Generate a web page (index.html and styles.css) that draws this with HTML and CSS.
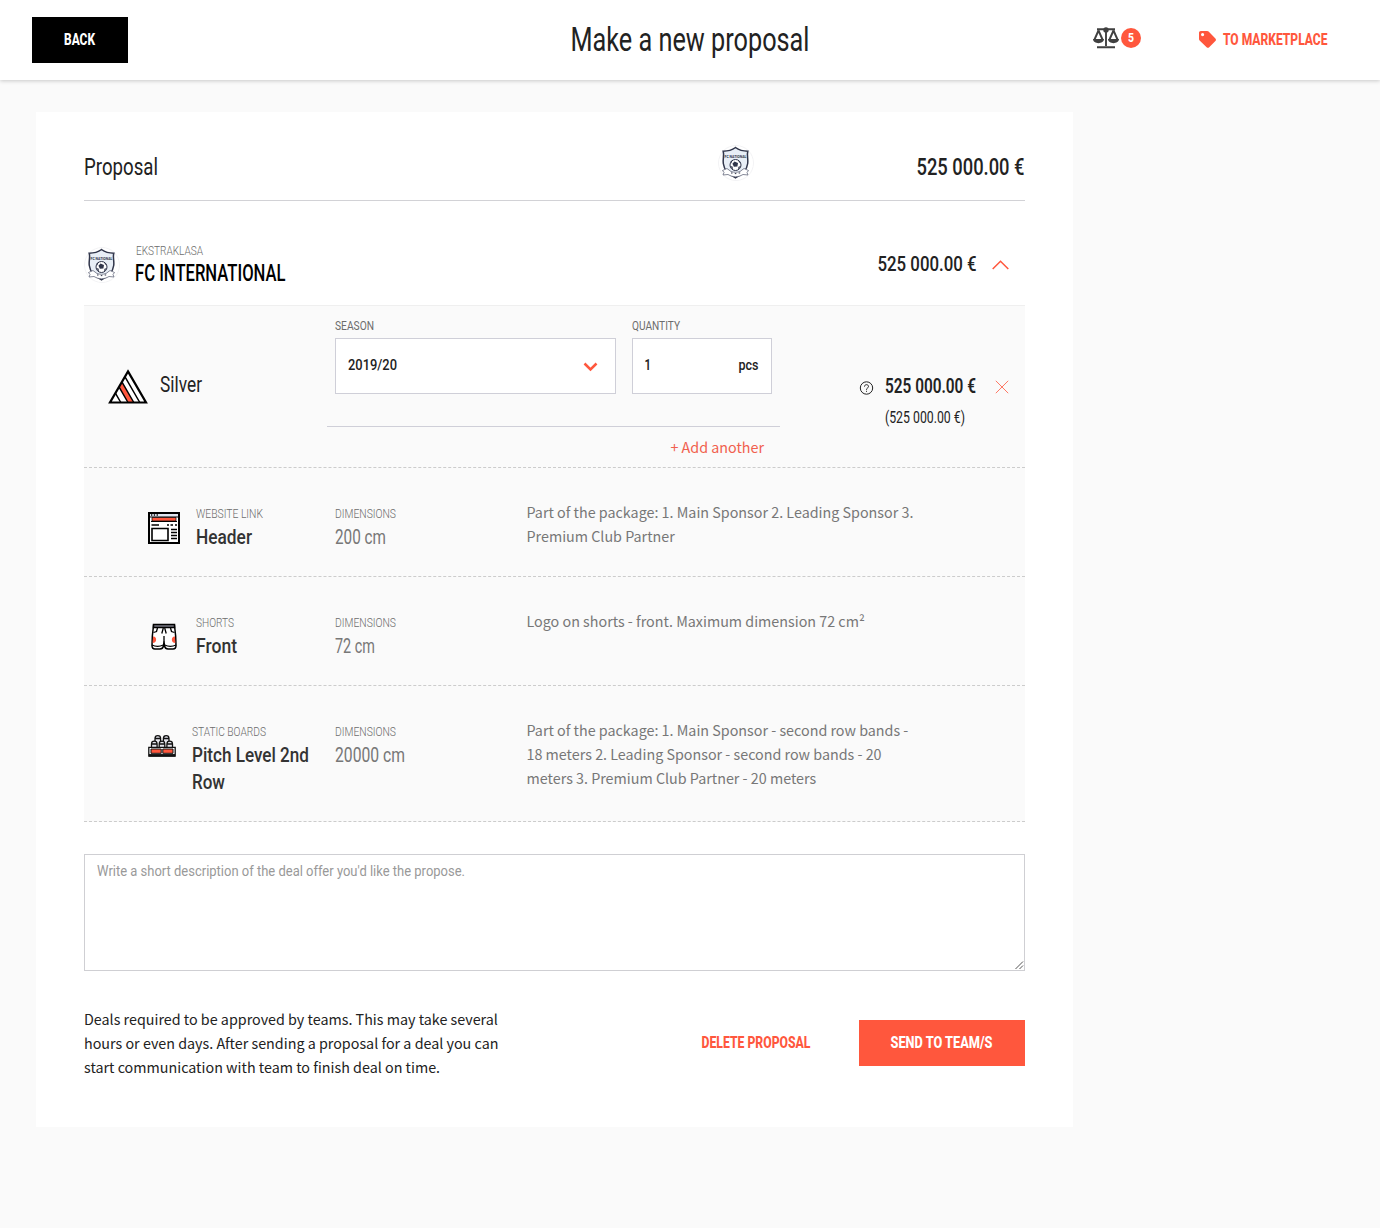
FILE: index.html
```html
<!DOCTYPE html>
<html lang="en">
<head>
<meta charset="utf-8">
<title>Make a new proposal</title>
<link rel="stylesheet" href="styles.css">
</head>
<body>
<svg class="defs" width="0" height="0">
  <symbol id="crest" viewBox="0 0 36 36">
    <circle cx="18" cy="18" r="17.5" fill="#fff" stroke="#f3f3f5"/>
    <path d="M17.500 2.500c3 2.200 7.500 3.700 12.300 3.700-1.200 4 .6 8-.1 12.300-.8 6.500-5.500 11-12.200 14.300C10.800 29.500 6.100 25 5.300 18.500 4.600 14.200 6.400 10.200 5.200 6.200c4.800 0 9.300-1.500 12.300-3.700z" fill="#e8eef6" stroke="#30354a" stroke-width="1.500"/>
    <text x="17.500" y="13" text-anchor="middle" textLength="22" lengthAdjust="spacingAndGlyphs" class="crest-name">FC NATIONAL</text>
    <circle cx="17.500" cy="20" r="5.500" fill="#fff" stroke="#30354a"/>
    <path d="M16.500 16.500l3.500 1.500-.6 3.500-3.500.2-1.500-3zM12.500 16.500l2.500-2-1.800 4zM20 14.800l3 3-2-.3zM12 21l2.500.5.700 3.300zM23 21l-2.500.8-.7 3z" fill="#30354a"/>
    <path d="M4.500 25.500l4.500-2 4 3c3 1 6 1 9 0l4-3 4.500 2-1.500 2 1 2.500-5-.5-3 1.500c-3 1-6 1-9 0l-3-1.500-5 .5 1-2.500z" fill="#fff" stroke="#656a7c" stroke-width=".8"/>
    <path d="M13 28h1.500M16.800 28.600h1.500M20.700 28h1.500" stroke="#30354a"/>
  </symbol>
</svg>

<header class="topbar">
  <button class="btn btn-back"><svg class="t w8 s16" width="32" height="22"><text y="16" textLength="31" lengthAdjust="spacingAndGlyphs">BACK</text></svg></button>
  <h1 class="title"><svg class="t w4 s32" width="239" height="40"><text x="-.5" y="31" textLength="239" lengthAdjust="spacingAndGlyphs">Make a new proposal</text></svg></h1>
  <nav class="nav">
    <a class="compare">
      <svg width="26" height="22" viewBox="0 0 26 22" fill="none" stroke="#404040" stroke-width="1.900">
        <path d="M4 2.300h18M13 2v17M4 20.200h18M5.500 3.500L1.500 12.500M5.500 3.500L9.500 12.500M20.500 3.500L16.500 12.500M20.500 3.500L24.500 12.500"/>
        <path d="M0 12h11c0 5.500-11 5.500-11 0zM15 12h11c0 5.500-11 5.500-11 0z" fill="#404040" stroke="none"/>
        <circle cx="13" cy="3" r="2.700" fill="#404040" stroke="none"/>
      </svg>
      <span class="badge"><svg class="t w8 s13" width="6" height="16"><text y="12" textLength="6" lengthAdjust="spacingAndGlyphs">5</text></svg></span>
    </a>
    <a class="market">
      <svg class="tag" width="17" height="17" viewBox="0 0 17 17"><path fill="#ff573d" fill-rule="evenodd" d="M1.800 0h6.400c.5 0 1 .2 1.400.6l6.800 6.800c.8.800.8 1.800 0 2.600l-6.200 6.200c-.8.800-1.800.8-2.600 0L.6 9.400C.2 9 0 8.500 0 8V1.800C0 .8.800 0 1.800 0zM3.600 2a1.600 1.600 0 100 3.200 1.600 1.600 0 000-3.200z"/></svg>
      <svg class="t w8 s16 red" width="105" height="22"><text y="16" textLength="104.500" lengthAdjust="spacingAndGlyphs">TO MARKETPLACE</text></svg>
    </a>
  </nav>
</header>

<main class="card">
  <section class="summary">
    <h2 class="summary-name"><svg class="t w4 s24" width="74" height="32"><text y="24" textLength="74" lengthAdjust="spacingAndGlyphs">Proposal</text></svg></h2>
    <svg class="crest" width="36" height="36"><use href="#crest"/></svg>
    <svg class="t w5 s24" width="108" height="32"><text x="-.5" y="24" textLength="108" lengthAdjust="spacingAndGlyphs">525 000.00 €</text></svg>
  </section>

  <section class="club">
    <svg class="crest" width="36" height="36"><use href="#crest"/></svg>
    <div class="club-name">
      <svg class="t w3 s14 gray" width="67" height="19"><text x="1" y="14" textLength="67" lengthAdjust="spacingAndGlyphs">EKSTRAKLASA</text></svg>
      <svg class="t w5 s24 black" width="150" height="30"><text y="21" textLength="150.500" lengthAdjust="spacingAndGlyphs">FC INTERNATIONAL</text></svg>
    </div>
    <svg class="t w5 s21" width="99" height="30"><text x="-.5" y="22" textLength="99" lengthAdjust="spacingAndGlyphs">525 000.00 €</text></svg>
    <svg class="chev" width="17" height="10" fill="none" stroke="#ff573d" stroke-width="1.500"><path d="M.7 9L8.500 1.200 16.300 9"/></svg>
  </section>

  <section class="package">
    <div class="tier">
      <svg width="40" height="35" viewBox="0 0 40 35">
        <path d="M20 2.200L38 33.500H2z" fill="#fff"/>
        <path d="M13.700 12.900L11 17.500 20.200 33.500H25.600z" fill="#ff573d"/>
        <path d="M16.900 7.600L31.800 33.500M13.900 12.800L25.800 33.500M11 17.900L20 33.500M7.400 24.100L12.800 33.500" fill="none" stroke="#000" stroke-width="1.500"/>
        <path d="M20 2.400L38 33.500H2z" fill="none" stroke="#000" stroke-width="2.200"/>
      </svg>
      <svg class="t w4 s22" width="42" height="32"><text y="23" textLength="42" lengthAdjust="spacingAndGlyphs">Silver</text></svg>
    </div>
    <div class="config">
      <div class="fields">
        <label class="field season">
          <svg class="t w4 s13 gray" width="39" height="20"><text y="12" textLength="39" lengthAdjust="spacingAndGlyphs">SEASON</text></svg>
          <span class="input">
            <svg class="t w5 s15" width="49" height="22"><text y="15" textLength="49" lengthAdjust="spacingAndGlyphs">2019/20</text></svg>
            <svg class="caret" width="15" height="10" fill="none" stroke="#ff573d" stroke-width="2.500"><path d="M1.500 2.500l6 6 6-6"/></svg>
          </span>
        </label>
        <label class="field quantity">
          <svg class="t w4 s13 gray" width="49" height="20"><text y="12" textLength="48" lengthAdjust="spacingAndGlyphs">QUANTITY</text></svg>
          <span class="input">
            <svg class="t w6 s15" width="6" height="22"><text x="-.5" y="15" textLength="6.500" lengthAdjust="spacingAndGlyphs">1</text></svg>
            <svg class="t w5 s15" width="20" height="22"><text x="-.5" y="15" textLength="20" lengthAdjust="spacingAndGlyphs">pcs</text></svg>
          </span>
        </label>
      </div>
      <a class="add">+ Add another</a>
    </div>
    <div class="price">
      <svg class="help" width="14" height="14" fill="none" stroke="#222" stroke-width="1"><circle cx="7.500" cy="7" r="6.200"/><path d="M5.500 5.600c0-2.600 4-2.600 4 0C9.500 7 7.500 6.800 7.500 8.800M7.500 9.800v1"/></svg>
      <div class="price-values">
        <svg class="t w6 s21" width="91" height="30"><text y="23" textLength="91" lengthAdjust="spacingAndGlyphs">525 000.00 €</text></svg>
        <svg class="t w4 s16" width="80" height="24"><text y="23" textLength="80" lengthAdjust="spacingAndGlyphs">(525 000.00 €)</text></svg>
      </div>
      <svg class="remove" width="14" height="14" stroke="#ff573d" stroke-width=".8"><path d="M.8.8l12.400 12.400M13.200.8L.8 13.200"/></svg>
    </div>
  </section>

  <section class="item">
    <div class="item-name">
      <svg width="32" height="32" viewBox="0 0 32 32">
        <path d="M1 1h30v30H1z" fill="#fff" stroke="#000" stroke-width="2"/>
        <path d="M2 2h28v3H2z" fill="#dfe5f0"/><path d="M3 3h1.300M5.800 3h1.300M8.600 3h1.300" stroke="#000" stroke-width="1.500"/><path d="M1 5h30M3 9.500h26" stroke="#000"/>
        <path d="M4 5.500h24V9H4z" fill="#ff573d" stroke="#000" stroke-width=".7"/>
        <path d="M3.500 13h7.500M19 13h2M22.500 13h2.500M27 13h2M23 17.500h6M23 20.500h6M23 23.500h6M23 26.500h6" stroke="#000" stroke-width="1.400"/>
        <path d="M4 16.500h16v12H4z" fill="#fff" stroke="#000" stroke-width="1.600"/>
      </svg>
      <div>
        <svg class="t w3 s13 gray" width="67" height="20"><text y="14" textLength="67" lengthAdjust="spacingAndGlyphs">WEBSITE LINK</text></svg>
        <svg class="t w5 s21 dark" width="56" height="27"><text y="20" textLength="56" lengthAdjust="spacingAndGlyphs">Header</text></svg>
      </div>
    </div>
    <div class="item-size">
      <svg class="t w3 s13 gray" width="61" height="20"><text y="14" textLength="61" lengthAdjust="spacingAndGlyphs">DIMENSIONS</text></svg>
      <svg class="t w4 s20 mid" width="51" height="27"><text y="20" textLength="51" lengthAdjust="spacingAndGlyphs">200 cm</text></svg>
    </div>
    <p class="item-text">Part of the package: 1. Main Sponsor 2. Leading Sponsor 3.<br>Premium Club Partner</p>
  </section>

  <section class="item">
    <div class="item-name">
      <svg width="32" height="32" viewBox="0 0 32 32" fill="none" stroke="#000" stroke-width="1.500">
        <path d="M5.500 4.500h21c1 7 1.500 14 1.500 20 0 2-1 3.500-3 3.500h-5c-2 0-3-1-3.500-3L16 20.500 15.500 25c-.5 2-1.500 3-3.500 3H7c-2 0-3-1.500-3-3.500 0-6 .5-13 1.500-20z" fill="#fff"/>
        <path d="M5.500 3.500h21v3h-21z" fill="#777783"/><path d="M5 15.500c4-.5 4.500 6.500-.3 6.500zM27 15.500c-4-.5-4.500 6.500.3 6.500z" fill="#ff573d" stroke="none"/>
        <path d="M4 24c3 1.500 8 1.500 11.300 0M16.700 24c3.300 1.500 8 1.500 11.300 0M9.500 7L8.500 10.500 5.500 11.500M22.500 7l1 3.500 3 1" stroke-width="1.300"/>
        <path d="M16 15v6M15.300 7l-1.500 5.500M16.700 7l1.500 5.500" stroke-width="1.300"/>
      </svg>
      <div>
        <svg class="t w3 s13 gray" width="38" height="20"><text y="14" textLength="38" lengthAdjust="spacingAndGlyphs">SHORTS</text></svg>
        <svg class="t w5 s21 dark" width="41" height="27"><text y="20" textLength="41" lengthAdjust="spacingAndGlyphs">Front</text></svg>
      </div>
    </div>
    <div class="item-size">
      <svg class="t w3 s13 gray" width="61" height="20"><text y="14" textLength="61" lengthAdjust="spacingAndGlyphs">DIMENSIONS</text></svg>
      <svg class="t w4 s20 mid" width="40" height="27"><text y="20" textLength="40" lengthAdjust="spacingAndGlyphs">72 cm</text></svg>
    </div>
    <p class="item-text">Logo on shorts - front. Maximum dimension 72 cm²</p>
  </section>

  <section class="item boards">
    <div class="item-name">
      <svg width="28" height="28" viewBox="0 0 28 28" fill="#e6e6ee" stroke="#111" stroke-width="1.300">
        <path d="M7 12V8.500a2.800 2.800 0 015.600 0V12M15.400 12V8.500a2.800 2.800 0 015.600 0V12M7 8.500h5.600M15.400 8.500h5.600"/>
        <path d="M3.500 17.500V14a2.800 2.800 0 015.600 0v3.500M11.200 17.500V14a2.800 2.800 0 015.600 0v3.500M18.900 17.500V14a2.800 2.800 0 015.600 0v3.500M3.500 14h5.600M11.200 14h5.600M18.900 14h5.600"/>
        <path d="M.8 17.300h26.400v8.900H.8z" fill="#fff"/><path d="M3 19h10.200v4.300H3zM14.800 19H25v4.300H14.800z" fill="#ff573d" stroke-width="1"/><path d="M1 25.300h26" stroke-width="2.500"/>
      </svg>
      <div>
        <svg class="t w3 s13 gray" width="74" height="20"><text y="14" textLength="74" lengthAdjust="spacingAndGlyphs">STATIC BOARDS</text></svg>
        <svg class="t w5 s21 dark" width="118" height="54"><text y="20" textLength="117" lengthAdjust="spacingAndGlyphs">Pitch Level 2nd</text><text y="47" textLength="33" lengthAdjust="spacingAndGlyphs">Row</text></svg>
      </div>
    </div>
    <div class="item-size">
      <svg class="t w3 s13 gray" width="61" height="20"><text y="14" textLength="61" lengthAdjust="spacingAndGlyphs">DIMENSIONS</text></svg>
      <svg class="t w4 s20 mid" width="70" height="27"><text y="20" textLength="70" lengthAdjust="spacingAndGlyphs">20000 cm</text></svg>
    </div>
    <p class="item-text">Part of the package: 1. Main Sponsor - second row bands -<br>18 meters 2. Leading Sponsor - second row bands - 20<br>meters 3. Premium Club Partner - 20 meters</p>
  </section>

  <div class="message">
    <svg class="t w4 s15 hint" width="368" height="22"><text y="15" textLength="368" lengthAdjust="spacingAndGlyphs">Write a short description of the deal offer you'd like the propose.</text></svg>
    <svg class="grip" width="9" height="9" stroke="#555" stroke-width="1"><path d="M1.500 9L9 1.500M5.500 9L9 5.500"/></svg>
  </div>

  <footer class="actions">
    <p class="note">Deals required to be approved by teams. This may take several<br>hours or even days. After sending a proposal for a deal you can<br>start communication with team to finish deal on time.</p>
    <a class="delete"><svg class="t w8 s16 red" width="109" height="22"><text x=".5" y="16" textLength="109" lengthAdjust="spacingAndGlyphs">DELETE PROPOSAL</text></svg></a>
    <button class="btn btn-send"><svg class="t w8 s16" width="102" height="22"><text x="-.5" y="16" textLength="102" lengthAdjust="spacingAndGlyphs">SEND TO TEAM/S</text></svg></button>
  </footer>
</main>
</body>
</html>
```
FILE: styles.css
```css
* { box-sizing: border-box; }
body { margin: 0; min-height: 1228px; background: #fafafa; color: #222; font-family: "Noto Sans CJK SC", "Open Sans", sans-serif; font-size: 14.320px; line-height: 24px; }
svg { display: block; flex: none; overflow: visible; }
.defs { position: absolute; }
h1, h2, p { margin: 0; }

/* condensed display text */
.t { fill: #222; font-family: Roboto, "Liberation Sans", sans-serif; }
.w3 { font-weight: 300; } .w4 { font-weight: 400; } .w5 { font-weight: 500; } .w6 { font-weight: 600; } .w8 { font-weight: 800; }
.s13 { font-size: 13.300px; } .s14 { font-size: 13.600px; } .s15 { font-size: 15.300px; } .s16 { font-size: 15.800px; }
.s20 { font-size: 20.800px; } .s21 { font-size: 21px; } .s22 { font-size: 22px; } .s24 { font-size: 24px; } .s32 { font-size: 32.500px; }
.gray { fill: #6c6c6c; } .mid { fill: #777; } .dark { fill: #333; } .hint { fill: #999; } .red { fill: #ff573d; } .black { fill: #000; }
.crest-name { font: 700 4px Roboto, sans-serif; fill: #30354a; }

.topbar { display: grid; grid-template-columns: 1fr auto 1fr; align-items: center; height: 80px; padding: 0 52px 0 32px; background: #fff; box-shadow: 0 1px 4px rgba(0,0,0,.2); }
.btn { display: flex; align-items: center; justify-content: center; height: 46px; padding: 0; border: 0; }
.btn .t { fill: #fff; }
.btn-back { width: 96px; background: #000; }
.title { margin-left: 20px; }
.nav { display: flex; justify-content: flex-end; align-items: center; gap: 58px; }
.compare { display: flex; align-items: center; gap: 2px; margin-top: -4px; }
.badge { display: flex; align-items: center; justify-content: center; width: 20px; height: 20px; border-radius: 50%; background: #ff573d; }
.badge .t { fill: #fff; }
.market { display: flex; align-items: center; gap: 7px; }
.tag { margin-top: -2px; }

.card { width: 1037px; height: 1015px; margin: 32px 0 0 36px; padding: 32px 48px 0; background: #fff; }
.summary { display: flex; align-items: flex-start; height: 57px; padding-top: 7px; border-bottom: 1px solid #d2d2d6; }
.summary-name { width: 634px; }
.summary .crest { margin: -6px 163px 0 0; }
.club { display: flex; align-items: flex-start; height: 104px; padding-top: 40px; }
.club .crest { margin: 6px 15px 0 0; }
.club-name { width: 743px; }
.club > .t { margin-top: 8px; }
.chev { margin: 19px 0 0 15px; }

.package { display: flex; height: 163px; background: #fafafa; border-top: 1px solid #efefef; border-bottom: 1px dashed #ccc; }
.tier { display: flex; gap: 12px; width: 243px; padding: 63px 0 0 24px; }
.config { width: 453px; padding-top: 12px; }
.fields { display: flex; gap: 16px; height: 109px; padding: 0 8px; border-bottom: 1px solid #cfcfd8; }
.field.season { width: 281px; }
.field.quantity { width: 140px; }
.input { display: flex; align-items: center; justify-content: space-between; height: 56px; padding: 0 12px; background: #fff; border: 1px solid #cfcfd8; }
.season .input { padding-right: 17px; }
.add { display: block; padding: 8px 16px 0; text-align: right; color: #f1604e; }
.price { display: flex; width: 245px; padding-top: 64px; }
.help { margin: 11px 12px 0 79px; }
.price-values { width: 90px; }
.remove { margin: 10px 0 0 20px; }

.item { display: flex; height: 109px; padding: 32px 0 0 64px; background: #fafafa; border-bottom: 1px dashed #ccc; }
.item-name { display: flex; gap: 16px; width: 187px; }
.item-name > svg { margin-top: 12px; }
.item-name > div, .item-size { padding-top: 4px; }
.item-size { width: 191.500px; }
.item-text { color: #777; white-space: nowrap; }
.boards { height: 136px; }

.message { position: relative; height: 117px; margin-top: 32px; padding: 6px 12px; border: 1px solid #cfcfd3; }
.grip { position: absolute; right: 1px; bottom: 1px; }
.actions { display: flex; padding-top: 36px; }
.note { width: 617px; white-space: nowrap; }
.delete { width: 158px; padding-top: 25px; }
.btn-send { width: 166px; margin-top: 13px; background: #ff573d; }
```
